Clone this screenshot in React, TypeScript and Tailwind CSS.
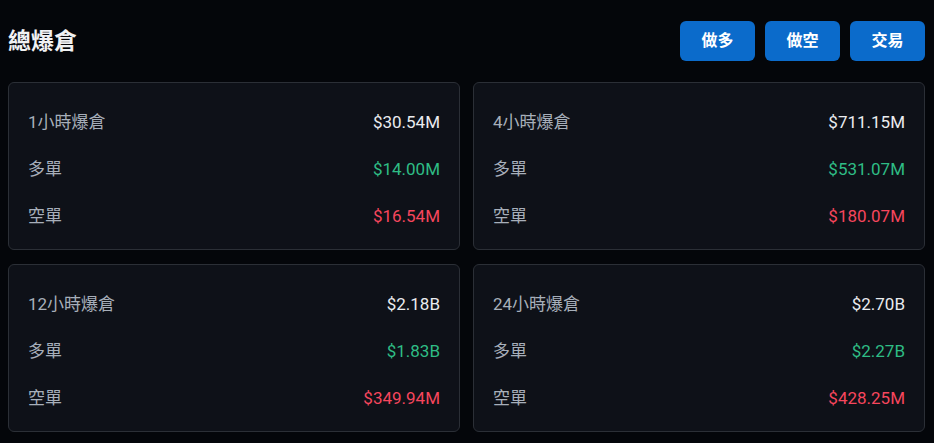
import React from "react";

type Row = { label: string; value: string; tone: "white" | "green" | "red" };

const CARDS: Row[][] = [
    [
        { label: "1小時爆倉", value: "$30.54M", tone: "white" },
        { label: "多單", value: "$14.00M", tone: "green" },
        { label: "空單", value: "$16.54M", tone: "red" },
    ],
    [
        { label: "4小時爆倉", value: "$711.15M", tone: "white" },
        { label: "多單", value: "$531.07M", tone: "green" },
        { label: "空單", value: "$180.07M", tone: "red" },
    ],
    [
        { label: "12小時爆倉", value: "$2.18B", tone: "white" },
        { label: "多單", value: "$1.83B", tone: "green" },
        { label: "空單", value: "$349.94M", tone: "red" },
    ],
    [
        { label: "24小時爆倉", value: "$2.70B", tone: "white" },
        { label: "多單", value: "$2.27B", tone: "green" },
        { label: "空單", value: "$428.25M", tone: "red" },
    ],
];

const TONE = {
    white: "text-[#eaecef]",
    green: "text-[#2ebd85]",
    red: "text-[#f6465d]",
};

export default function App() {
    return (
        <div
            className="min-h-[443px] w-full bg-[#04060a] pl-2 pr-[9px] pt-[21px] pb-2"
            style={{ fontFamily: 'Roboto, "Noto Sans CJK TC", sans-serif' }}
        >
            {/* Header */}
            <div className="flex h-10 items-center justify-between">
                <h1 className="mt-[2px] text-[23px] font-bold text-[#f0f1f3]">總爆倉</h1>
                <div className="flex gap-[10px]">
                    {["做多", "做空", "交易"].map((t) => (
                        <button
                            key={t}
                            className="h-10 w-[75px] rounded-md bg-[#0b6bcb] text-[16px] font-bold text-white"
                        >
                            {t}
                        </button>
                    ))}
                </div>
            </div>

            {/* Cards */}
            <div className="mt-[21px] grid grid-cols-2 gap-x-[13px] gap-y-[14px]">
                {CARDS.map((rows, i) => (
                    <div
                        key={i}
                        className="flex h-[168px] flex-col justify-center rounded-md border border-[#2b2f36] bg-[#0e1118] px-[19px] pt-[7px]"
                    >
                        {rows.map((r) => (
                            <div key={r.label} className="flex h-[47px] items-center justify-between text-[17px]">
                                <span className="text-[#a7afba]">{r.label}</span>
                                <span className={TONE[r.tone]}>{r.value}</span>
                            </div>
                        ))}
                    </div>
                ))}
            </div>
        </div>
    );
}
